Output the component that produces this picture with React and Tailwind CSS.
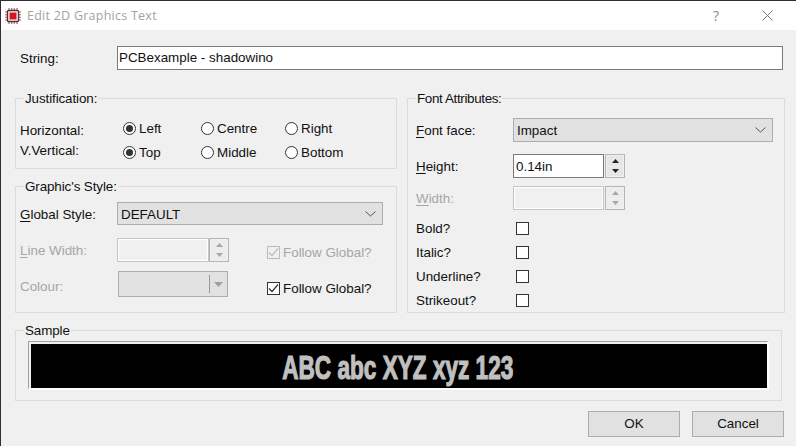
const Radio = ({ label, on }) => (
    <div className="flex items-center gap-[3px]">
        <div className="w-[13px] h-[13px] rounded-full border border-[#333] bg-white flex items-center justify-center">
            {on && <div className="w-[7px] h-[7px] rounded-full bg-[#333]"></div>}
        </div>
        <span>{label}</span>
    </div>
)

const Check = ({ on, disabled }) => (
    <div className={`w-[13px] h-[13px] border flex items-center justify-center ${disabled ? 'border-[#bcbcbc]' : 'border-[#333] bg-white'}`}>
        {on && (
            <svg width="11" height="11" viewBox="0 0 11 11" fill="none" stroke={disabled ? '#bcbcbc' : '#333'} strokeWidth="1.2">
                <path d="M1 5.5 L4 8.5 L10 1.5" />
            </svg>
        )}
    </div>
)

const Chevron = () => (
    <svg width="11" height="6" viewBox="0 0 11 6" fill="none" stroke="#555" strokeWidth="1">
        <path d="M0.5 0.5 L5.5 5 L10.5 0.5" />
    </svg>
)

const Combo = ({ value, className }) => (
    <div className={`h-full bg-[#e1e1e1] border border-[#adadad] flex items-center justify-between pl-[3px] pr-[6px] text-[#111] ${className}`}>
        <span>{value}</span>
        <Chevron />
    </div>
)

const Spin = ({ disabled, className }) => {
    const color = disabled ? '#a8a8a8' : '#222'
    const btn = `flex-1 flex items-center justify-center ${disabled ? 'bg-[#ececec]' : 'bg-[#e6e6e6]'}`
    return (
        <div className={`h-full border border-[#b4b4b4] flex flex-col gap-px p-px ${className}`}>
            <div className={btn}>
                <svg width="7" height="4" viewBox="0 0 7 4"><path d="M3.5 0 L7 4 L0 4 Z" fill={color} /></svg>
            </div>
            <div className={btn}>
                <svg width="7" height="4" viewBox="0 0 7 4"><path d="M0 0 L7 0 L3.5 4 Z" fill={color} /></svg>
            </div>
        </div>
    )
}

const Group = ({ title, className, children }) => (
    <fieldset className={`border border-[#dcdcdc] [&>legend]:ml-[8px] ${className}`}>
        <legend className="px-[1px] h-[16px] leading-[18px] tracking-[-0.1px] text-[#111]">{title}</legend>
        {children}
    </fieldset>
)

const ChipIcon = () => (
    <svg width="18" height="18" viewBox="0 0 18 18">
        <path d="M5 1v16M7.7 1v16M10.3 1v16M13 1v16M1 5h16M1 7.7h16M1 10.3h16M1 13h16" stroke="#d9434e" strokeWidth="1.1" />
        <rect x="3.5" y="3.5" width="11" height="11" rx="1" fill="#fff" stroke="#3a3a3a" strokeWidth="1.4" />
        <rect x="5.5" y="5.5" width="7" height="7" fill="#d8121f" />
    </svg>
)

const App = () => {
    return (
        <div className="w-[796px] h-[446px] overflow-hidden bg-[#f0f0f0] border-l border-t border-[#2f2f2f] text-[13.4px] leading-[16px] text-[#111] font-['Liberation_Sans',Arial,sans-serif]">
            <div className="h-[29px] bg-white flex items-center pl-[3px] pr-[23px]">
                <ChipIcon />
                <span className="ml-[5px] text-[#a3a3a3] text-[12.5px] tracking-[0.25px] font-['Open_Sans',sans-serif]">Edit 2D Graphics Text</span>
                <span className="ml-auto text-[#8a8a8a] text-[14px] font-['Open_Sans',sans-serif]">?</span>
                <svg className="ml-[43px]" width="11" height="11" viewBox="0 0 11 11" stroke="#777" strokeWidth="1">
                    <path d="M0.5 0.5 L10.5 10.5 M10.5 0.5 L0.5 10.5" />
                </svg>
            </div>

            <div className="pl-[14px] [&_span]:pt-[2px]">
                <div className="flex items-center h-[24px] mt-[16px] pl-[5px]">
                    <span className="w-[97px]">String:</span>
                    <div className="w-[666px] h-full border border-[#7a7a7a] bg-white flex items-center pl-[1px]">PCBexample - shadowino</div>
                </div>

                <div className="flex gap-[10px] mt-[20px]">
                    <div className="w-[382px] flex flex-col gap-[9px]">
                        <Group title="Justification:" className="h-[79px]">
                            <div className="flex pl-[4px]">
                                <div className="w-[103px] pt-[14px]">
                                    <div className="h-[20px] leading-[22px]">Horizontal:</div>
                                    <div className="h-[20px] leading-[22px]">V.Vertical:</div>
                                </div>
                                <div className="grid grid-cols-[78px_84px_80px] auto-rows-[24px] items-center pt-[10px]">
                                    <Radio label="Left" on />
                                    <Radio label="Centre" />
                                    <Radio label="Right" />
                                    <Radio label="Top" on />
                                    <Radio label="Middle" />
                                    <Radio label="Bottom" />
                                </div>
                            </div>
                        </Group>
                        <Group title="Graphic's Style:" className="h-[135px]">
                            <div className="pl-[4px] pt-[8px]">
                                <div className="flex items-center h-[23px]">
                                    <span className="w-[97px]"><u className="underline-offset-2">G</u>lobal Style:</span>
                                    <Combo value="DEFAULT" className="w-[266px]" />
                                </div>
                                <div className="flex items-center h-[24px] mt-[13px] text-[#a6a6a6]">
                                    <span className="w-[97px]"><u className="underline-offset-2">L</u>ine Width:</span>
                                    <div className="w-[92px] h-full border border-[#c4c4c4] bg-[#f0f0f0] shadow-[inset_0_0_0_1px_#fff]"></div>
                                    <Spin disabled className="w-[20px]" />
                                    <div className="flex items-center gap-[3px] ml-[38px] pt-[4px]">
                                        <Check on disabled />
                                        <span>Follow Global?</span>
                                    </div>
                                </div>
                                <div className="flex items-center h-[26px] mt-[9px] text-[#a6a6a6]">
                                    <span className="w-[98px] translate-y-[2px]">Colour:</span>
                                    <div className="w-[110px] h-full border border-[#adadad] bg-[#e1e1e1] flex items-center justify-end">
                                        <div className="w-px h-[18px] bg-[#9a9a9a]"></div>
                                        <div className="w-[17px] flex justify-center">
                                            <svg width="9" height="5" viewBox="0 0 9 5"><path d="M0 0 L9 0 L4.5 5 Z" fill="#a0a0a0" /></svg>
                                        </div>
                                    </div>
                                    <div className="flex items-center gap-[3px] ml-[39px] pt-[8px] text-[#111]">
                                        <Check on />
                                        <span>Follow Global?</span>
                                    </div>
                                </div>
                            </div>
                        </Group>
                    </div>

                    <Group title="Font Attributes:" className="w-[378px] h-[223px] [&>legend]:ml-[7px] [&>legend]:tracking-[-0.35px]">
                        <div className="pl-[8px] pt-[12px]">
                            <div className="flex items-center h-[24px]">
                                <span className="w-[97px]"><u className="underline-offset-2">F</u>ont face:</span>
                                <Combo value="Impact" className="w-[260px]" />
                            </div>
                            <div className="flex items-center h-[24px] mt-[12px]">
                                <span className="w-[97px]"><u className="underline-offset-2">H</u>eight:</span>
                                <div className="w-[91px] h-full border border-[#7a7a7a] bg-white flex items-center pl-[2px]"><span>0.14in</span></div>
                                <Spin className="w-[20px] ml-[1px]" />
                            </div>
                            <div className="flex items-center h-[24px] mt-[8px] text-[#a6a6a6]">
                                <span className="w-[97px]"><u className="underline-offset-2">W</u>idth:</span>
                                <div className="w-[91px] h-full border border-[#c4c4c4] bg-[#f0f0f0] shadow-[inset_0_0_0_1px_#fff]"></div>
                                <Spin disabled className="w-[20px] ml-[1px]" />
                            </div>
                            <div className="mt-[6px]">
                                {['Bold?', 'Italic?', 'Underline?', 'Strikeout?'].map((name) => (
                                    <div key={name} className="flex items-center h-[24px]">
                                        <span className="w-[100px]">{name}</span>
                                        <Check />
                                    </div>
                                ))}
                            </div>
                        </div>
                    </Group>
                </div>

                <Group title="Sample" className="w-[767px] h-[79px] mt-[9px]">
                    <div className="pl-[12px] pt-[3px]">
                        <div className="w-[741px] h-[49px] bg-[#f0f0f0] border-t border-l border-t-[#a0a0a0] border-l-[#a0a0a0] border-b-2 border-b-white border-r-2 border-r-white pt-[2px] pl-[2px] flex">
                            <div className="flex-1 bg-black flex items-center justify-center overflow-hidden pr-[3px]">
                                <span className="inline-block whitespace-nowrap scale-x-[0.685] text-[33px] leading-[33px] font-bold text-[#c0c0c0] [-webkit-text-stroke:1.2px_#c0c0c0]">ABC abc XYZ xyz 123</span>
                            </div>
                        </div>
                    </div>
                </Group>

                <div className="flex justify-end gap-[12px] mt-[10px] pr-[12px]">
                    <button className="w-[92px] h-[26px] bg-[#e1e1e1] border border-[#adadad] text-[#111]">OK</button>
                    <button className="w-[92px] h-[26px] bg-[#e1e1e1] border border-[#adadad] text-[#111]">Cancel</button>
                </div>
            </div>
        </div>
    )
}

export default App
